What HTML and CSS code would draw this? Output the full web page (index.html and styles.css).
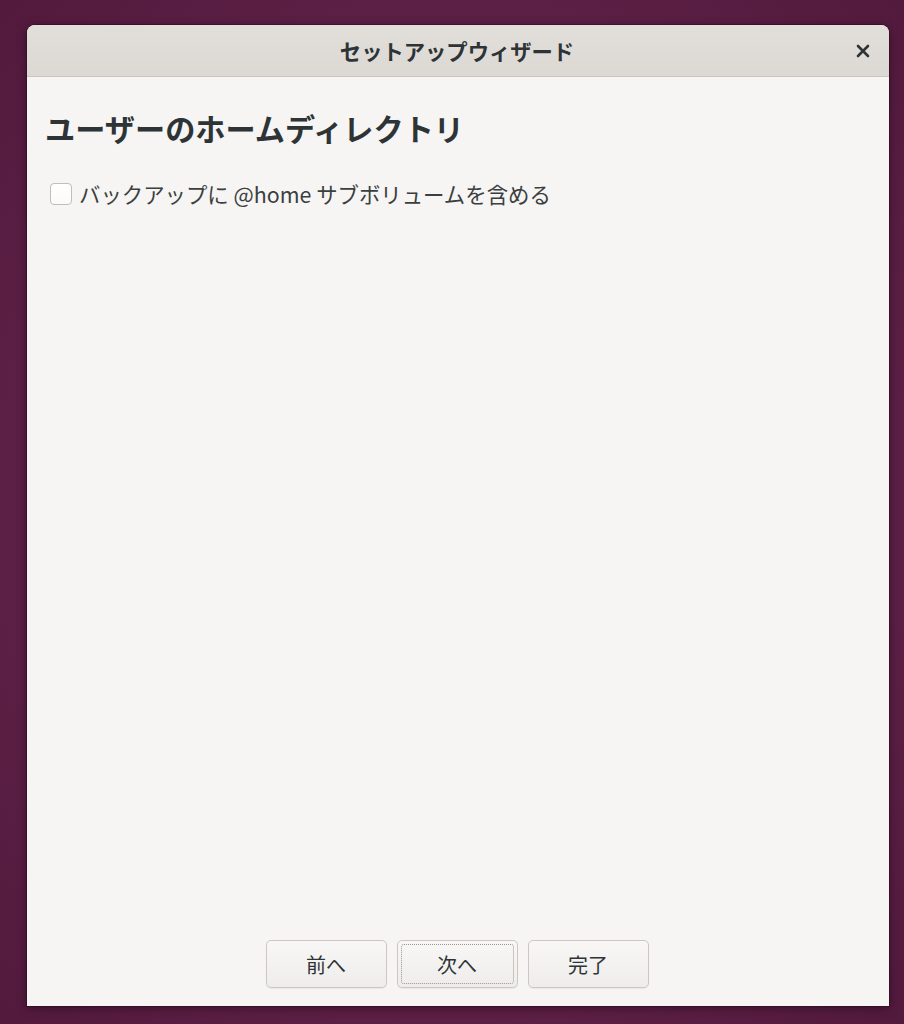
FILE: index.html
```html
<!DOCTYPE html>
<html lang="ja">
<head>
<meta charset="utf-8">
<title>セットアップウィザード</title>
<link rel="stylesheet" href="styles.css">
</head>
<body>
<div class="window">
  <header class="titlebar">
    <span class="title">セットアップウィザード</span>
    <button class="close" aria-label="閉じる">
      <svg width="14" height="14" viewBox="0 0 14 14"><path d="M2 2 L12 12 M12 2 L2 12" stroke="#2e3436" stroke-width="2.6" stroke-linecap="round"/></svg>
    </button>
  </header>
  <main class="content">
    <h1 class="heading">ユーザーのホームディレクトリ</h1>
    <label class="check-row">
      <span class="checkbox"></span>
      <span class="check-label">バックアップに @home サブボリュームを含める</span>
    </label>
  </main>
  <footer class="actions">
    <button class="btn">前へ</button>
    <button class="btn focused"><span class="focus-ring">次へ</span></button>
    <button class="btn">完了</button>
  </footer>
</div>
</body>
</html>
```
FILE: styles.css
```css
html, body {
  margin: 0;
  padding: 0;
}
body {
  width: 904px;
  height: 1024px;
  background: radial-gradient(ellipse at center, #5e2148 0%, #5c1f45 70%, #521a3d 100%);
  font-family: "Noto Sans", "Noto Sans CJK JP", sans-serif;
  padding: 25px 16px 18px 27px;
  box-sizing: border-box;
}
.window {
  width: 862px;
  height: 981px;
  display: flex;
  flex-direction: column;
  background: #f6f5f4;
  border-radius: 8px 8px 0 0;
  box-shadow: 0 2px 10px rgba(30, 5, 20, 0.55), 0 0 0 1px rgba(40, 10, 30, 0.4);
  overflow: hidden;
}
.titlebar {
  height: 52px;
  flex: none;
  display: flex;
  align-items: center;
  justify-content: center;
  position: relative;
  background: linear-gradient(#e2dfdb, #dcd9d5);
  border-bottom: 1px solid #c9c5bf;
  box-sizing: border-box;
}
.title {
  font-family: "Noto Sans CJK JP", sans-serif;
  font-weight: 700;
  font-size: 21.3px;
  color: #2e3436;
  margin-right: 2px;
}
.close {
  position: absolute;
  right: 18px;
  top: 18px;
  width: 16px;
  height: 16px;
  padding: 0;
  border: 0;
  background: none;
  display: flex;
  align-items: center;
  justify-content: center;
}
.content {
  flex: 1;
  padding: 33px 18px 0 18px;
}
.heading {
  margin: 0;
  font-family: "Noto Sans CJK JP", sans-serif;
  font-weight: 700;
  font-size: 30.2px;
  line-height: 36px;
  color: #2e3436;
}
.check-row {
  margin-top: 36px;
  display: flex;
  align-items: center;
  gap: 7px;
  height: 24px;
  padding-left: 5px;
}
.checkbox {
  width: 20px;
  height: 20px;
  border: 1px solid #c3bdb7;
  border-radius: 4px;
  background: linear-gradient(#ffffff, #fbfafa);
  flex: none;
}
.check-label {
  font-family: "Noto Sans CJK JP", sans-serif;
  font-size: 21.4px;
  color: #3a3f40;
  line-height: 24px;
}
.actions {
  flex: none;
  display: flex;
  justify-content: center;
  gap: 10px;
  padding: 0 2px 18px 0;
}
.btn {
  width: 121px;
  height: 48px;
  border: 1px solid #cdc7c2;
  border-radius: 5px;
  background: linear-gradient(#f8f7f6, #efedec);
  box-shadow: 0 1px 1px rgba(0, 0, 0, 0.06);
  font-family: "Noto Sans CJK JP", sans-serif;
  font-size: 20px;
  color: #2e3436;
  padding: 0;
  display: flex;
  align-items: center;
  justify-content: center;
}
.btn.focused {
  padding: 3px;
}
.focus-ring {
  flex: 1;
  align-self: stretch;
  display: flex;
  align-items: center;
  justify-content: center;
  border: 1px dotted #9a9591;
  border-radius: 3px;
}
```
